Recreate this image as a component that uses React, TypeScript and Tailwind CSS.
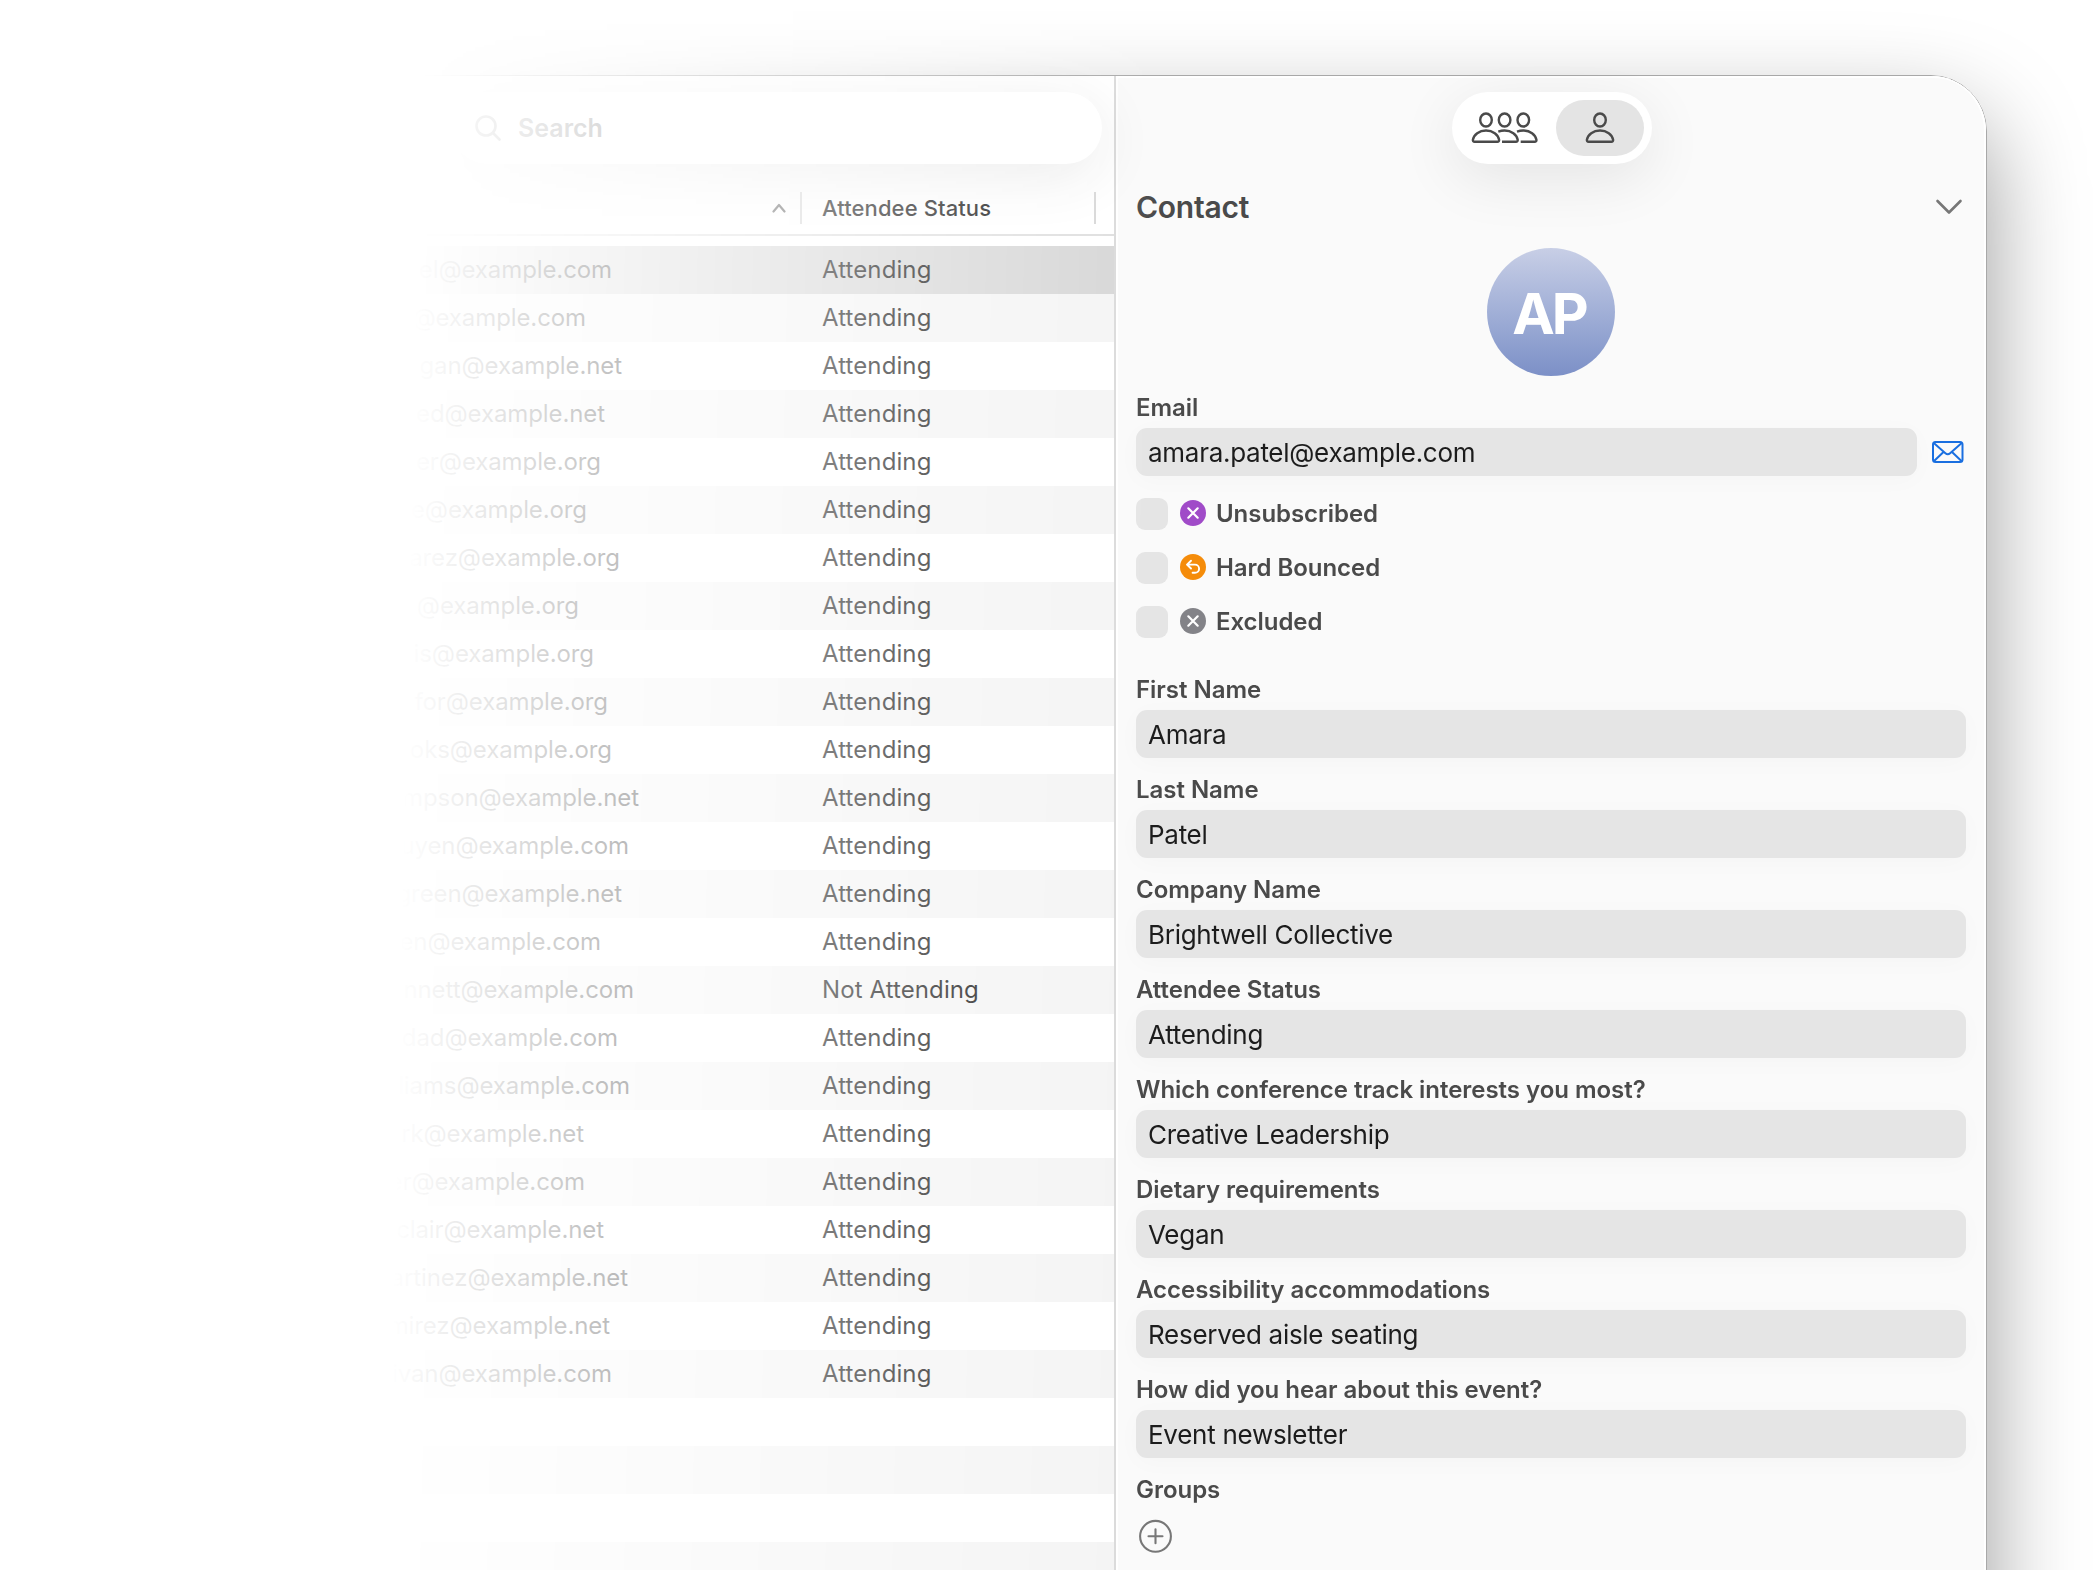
import React, { useState } from "react";

interface Attendee {
  email: string;
  width: number;
  status: string;
}

interface Field {
  label: string;
  value: string;
}

const attendees: Attendee[] = [
  { email: "el@example.com", width: 411, status: "Attending" },
  { email: "@example.com", width: 385, status: "Attending" },
  { email: "gan@example.net", width: 421, status: "Attending" },
  { email: "ed@example.net", width: 404, status: "Attending" },
  { email: "er@example.org", width: 400, status: "Attending" },
  { email: "e@example.org", width: 386, status: "Attending" },
  { email: "arez@example.org", width: 419, status: "Attending" },
  { email: "@example.org", width: 378, status: "Attending" },
  { email: "is@example.org", width: 393, status: "Attending" },
  { email: "for@example.org", width: 407, status: "Attending" },
  { email: "oks@example.org", width: 411, status: "Attending" },
  { email: "mpson@example.net", width: 438, status: "Attending" },
  { email: "uyen@example.com", width: 428, status: "Attending" },
  { email: "green@example.net", width: 421, status: "Attending" },
  { email: "en@example.com", width: 400, status: "Attending" },
  { email: "nnett@example.com", width: 433, status: "Not Attending" },
  { email: "dad@example.com", width: 417, status: "Attending" },
  { email: "liams@example.com", width: 429, status: "Attending" },
  { email: "rk@example.net", width: 383, status: "Attending" },
  { email: "er@example.com", width: 384, status: "Attending" },
  { email: "clair@example.net", width: 403, status: "Attending" },
  { email: "artinez@example.net", width: 427, status: "Attending" },
  { email: "mirez@example.net", width: 409, status: "Attending" },
  { email: "ivan@example.com", width: 411, status: "Attending" },
];

const fields: Field[] = [
  { label: "First Name", value: "Amara" },
  { label: "Last Name", value: "Patel" },
  { label: "Company Name", value: "Brightwell Collective" },
  { label: "Attendee Status", value: "Attending" },
  { label: "Which conference track interests you most?", value: "Creative Leadership" },
  { label: "Dietary requirements", value: "Vegan" },
  { label: "Accessibility accommodations", value: "Reserved aisle seating" },
  { label: "How did you hear about this event?", value: "Event newsletter" },
];

const PersonIcon: React.FC = () => (
  <svg width="30" height="32" viewBox="0 0 30 32" fill="none" stroke="#4a4a4a" strokeWidth="2.4">
    <ellipse cx="15" cy="8" rx="5.8" ry="6.5" />
    <path d="M3.6 29.8h22.8c1.2 0 1.9-.8 1.7-2-.9-5.2-6.3-9.3-13.1-9.3S2.8 22.6 1.9 27.8c-.2 1.2.5 2 1.7 2Z" />
  </svg>
);

const PeopleIcon: React.FC = () => (
  <svg width="68" height="32" viewBox="0 0 68 32" fill="none" stroke="#4a4a4a" strokeWidth="2.4">
    <ellipse cx="15" cy="8" rx="5.8" ry="6.5" />
    <ellipse cx="33.6" cy="8" rx="5.8" ry="6.5" />
    <ellipse cx="52.3" cy="8" rx="5.8" ry="6.5" />
    <path d="M3.6 29.8h22.8c1.2 0 1.9-.8 1.7-2-.9-5.2-6.3-9.3-13.1-9.3S2.8 22.6 1.9 27.8c-.2 1.2.5 2 1.7 2Z" />
    <path d="M27.3 19.6c2-.7 4-1.1 6.3-1.1 6.8 0 12.2 4.1 13.1 9.3.2 1.2-.5 2-1.7 2H31" />
    <path d="M46 19.6c2-.7 4-1.1 6.3-1.1 6.8 0 12.2 4.1 13.1 9.3.2 1.2-.5 2-1.7 2H49.7" />
  </svg>
);

const CrossBadge: React.FC<{ color: string }> = ({ color }) => (
  <svg width="26" height="26" viewBox="0 0 26 26" fill="none">
    <circle cx="13" cy="13" r="13" fill={color} />
    <path d="M8.3 8.3l9.4 9.4M17.7 8.3l-9.4 9.4" stroke="#fff" strokeWidth="2.2" strokeLinecap="round" />
  </svg>
);

const BounceBadge: React.FC = () => (
  <svg width="26" height="26" viewBox="0 0 26 26" fill="none">
    <circle cx="13" cy="13" r="13" fill="#f58c0a" />
    <path
      d="M11 6.7L7 10.6l4 3.9M7.3 10.6H15a4.1 4.1 0 0 1 0 8.2h-2.4"
      stroke="#fff"
      strokeWidth="1.9"
      strokeLinecap="round"
      strokeLinejoin="round"
    />
  </svg>
);

const flags = [
  { label: "Unsubscribed", icon: <CrossBadge color="#a04bc8" /> },
  { label: "Hard Bounced", icon: <BounceBadge /> },
  { label: "Excluded", icon: <CrossBadge color="#838388" /> },
];

const FieldLabel: React.FC<{ children: React.ReactNode }> = ({ children }) => (
  <div className="h-[52px] pt-[11px] text-[24px] leading-[41px] font-[560] tracking-[-0.03px] whitespace-nowrap text-[#4a4a4a]">
    {children}
  </div>
);

const FieldValue: React.FC<{ value: string }> = ({ value }) => (
  <div className="h-12 flex-1 rounded-[11px] bg-[#e5e5e5] px-3 pt-px text-[26px] leading-[48px] tracking-[-0.28px] text-[#1c1c1c] shadow-[0_4px_24px_rgba(0,0,0,0.025)]">
    {value}
  </div>
);

const AttendeeList: React.FC = () => {
  const [selected, setSelected] = useState<number>(0);

  return (
    <div className="relative z-10 flex w-[913px] flex-col bg-white">
      {/* Search */}
      <div className="flex h-[108px] justify-end pt-4 pr-3">
        <div className="flex h-[72px] w-[650px] items-center rounded-full bg-white pl-[23px] shadow-[0_12px_60px_rgba(0,0,0,0.09)]">
          <svg width="26" height="26" viewBox="0 0 26 26" fill="none" stroke="#777" strokeWidth="2.6" strokeLinecap="round">
            <circle cx="11" cy="11" r="9.5" />
            <path d="M18 18l6.5 6.5" />
          </svg>
          <span className="ml-[17px] pt-[2px] text-[25px] font-semibold text-[#727272]">Search</span>
        </div>
      </div>

      {/* Column header */}
      <div className="flex h-[52px] items-center border-b-2 border-[#dedede] pb-[2px]">
        <div className="flex h-8 w-[601px] items-center justify-end border-r-2 border-[#d6d6d6] pr-[14px]">
          <svg width="14" height="10" viewBox="0 0 14 10" fill="none" stroke="#666" strokeWidth="2.2" strokeLinecap="round" strokeLinejoin="round">
            <path d="M1.5 8.5L7 2l5.5 6.5" />
          </svg>
        </div>
        <div className="flex h-8 w-[294px] items-center border-r-2 border-[#d6d6d6] pl-5 text-[22px] font-[450] tracking-[0.1px] text-[#1c1c1c]">
          Attendee Status
        </div>
      </div>

      {/* Rows */}
      <div className="pt-[10px]">
        {attendees.map((attendee, index) => (
          <div
            key={index}
            onClick={() => setSelected(index)}
            className={`flex h-12 text-[24px] leading-[48px] whitespace-nowrap text-[#1c1c1c] ${
              index === selected ? "bg-[#d6d6d6]" : index % 2 === 1 ? "bg-[#f4f4f4]" : "bg-white"
            }`}
          >
            <div className="w-[621px]">
              <div className="text-right tracking-[-0.1px]" style={{ width: attendee.width }}>
                {attendee.email}
              </div>
            </div>
            <div className="tracking-[0.1px]">{attendee.status}</div>
          </div>
        ))}
        <div className="h-12 bg-white" />
        <div className="h-12 bg-[#f4f4f4]" />
        <div className="h-12 bg-white" />
        <div className="h-12 bg-[#f4f4f4]" />
      </div>
    </div>
  );
};

const ContactPanel: React.FC = () => (
  <div className="flex-1 rounded-tr-[55px] border-l-2 border-[#dadada] bg-[#fafafa] px-5 shadow-[inset_2px_2px_1px_#fff,inset_-2px_0_1px_#fff]">
    {/* View switch */}
    <div className="flex justify-center pt-4 pl-[2px]">
      <div className="flex h-[72px] w-[200px] items-center rounded-full bg-white pr-2 pl-[19px] shadow-[0_14px_60px_rgba(0,0,0,0.09)]">
        <PeopleIcon />
        <div className="ml-auto flex h-14 w-22 items-center justify-center rounded-full bg-[#e4e4e4]">
          <PersonIcon />
        </div>
      </div>
    </div>

    {/* Contact */}
    <div className="flex h-[84px] items-center justify-between">
      <h2 className="pt-[2px] text-[30px] font-semibold tracking-[-0.25px] text-[#4a4a4a]">Contact</h2>
      <svg width="28" height="16" viewBox="0 0 28 16" fill="none" stroke="#777" strokeWidth="2.6" strokeLinecap="round" strokeLinejoin="round" className="mt-px mr-[3px]">
        <path d="M2.5 2L14 13.5 25.5 2" />
      </svg>
    </div>
    <div className="flex justify-center">
      <div className="flex h-32 w-32 items-center justify-center rounded-full bg-linear-to-b from-[#c8cfe6] to-[#7c90c7] pt-[3px] pr-1 text-[57px] font-bold tracking-[-3px] text-white">
        AP
      </div>
    </div>

    <FieldLabel>Email</FieldLabel>
    <div className="flex items-center">
      <FieldValue value="amara.patel@example.com" />
      <svg width="32" height="24" viewBox="0 0 32 24" fill="none" stroke="#1a6fe0" strokeWidth="2" strokeLinejoin="round" className="mr-[2px] ml-[15px]">
        <rect x="1" y="2" width="29.5" height="20" rx="2.5" />
        <path d="M1.8 3l11.6 10.2c1.5 1.3 3.2 1.3 4.7 0L29.7 3M1.8 21.3l9.7-9.3M29.7 21.3L20 12" />
      </svg>
    </div>

    <div className="mt-[22px] mb-5 flex flex-col gap-[22px]">
      {flags.map((flag) => (
        <div key={flag.label} className="flex h-8 items-center">
          <div className="h-8 w-8 rounded-[9px] bg-[#e5e5e5]" />
          <div className="mr-[10px] mb-[2px] ml-3">{flag.icon}</div>
          <span className="text-[24px] font-[560] tracking-[-0.05px] text-[#4a4a4a]">{flag.label}</span>
        </div>
      ))}
    </div>

    {fields.map((field) => (
      <div key={field.label}>
        <FieldLabel>{field.label}</FieldLabel>
        <FieldValue value={field.value} />
      </div>
    ))}

    <FieldLabel>Groups</FieldLabel>
    <svg width="34" height="34" viewBox="0 0 34 34" fill="none" stroke="#777" strokeWidth="2.1" strokeLinecap="round" className="mt-[9px] ml-[3px]">
      <circle cx="16.5" cy="17.3" r="15.4" />
      <path d="M9.5 17.3h14M16.5 10.3v14" />
    </svg>
  </div>
);

const App: React.FC = () => {
  return (
    <div className="h-[1570px] w-[2098px] overflow-hidden bg-white font-['Inter',sans-serif]">
      {/* The window fades out towards the left */}
      <div className="h-full overflow-hidden mask-[linear-gradient(91.3deg,transparent_422px,#000_1165px)] pt-[75px] pl-[200px]">
        <div className="flex h-[1800px] w-[1787px] rounded-[56px] border border-[#a8a8a8] shadow-[0_42px_96px_rgba(0,0,0,0.4)]">
          <AttendeeList />
          <ContactPanel />
        </div>
      </div>
    </div>
  );
};

export default App;
